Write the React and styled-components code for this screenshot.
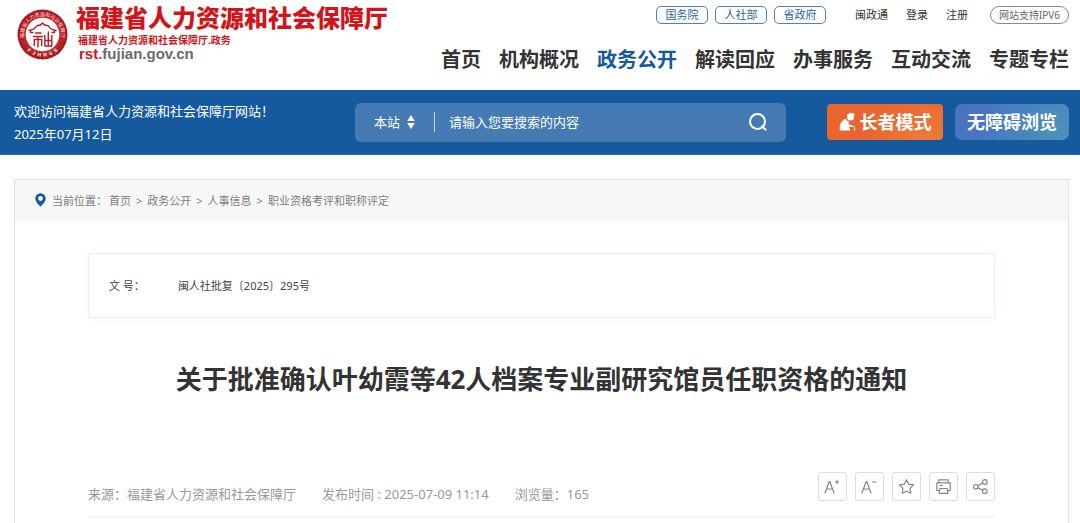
import React from "react";
import styled, { createGlobalStyle } from "styled-components";

const GlobalStyle = createGlobalStyle`
  *, *::before, *::after { box-sizing: border-box; }
  body {
    margin: 0;
    background: #fff;
    color: #333;
    font-family: "Noto Sans", "Noto Sans CJK SC", sans-serif;
    font-size: 13px;
  }
  a { color: inherit; text-decoration: none; }
  h1, p, dl, dd, dt, ul, ol { margin: 0; padding: 0; }
  ul, ol { list-style: none; }
  button, input, select { font: inherit; color: inherit; margin: 0; }
  svg { display: block; flex: none; }
`;

const Page = styled.div`
  min-height: 100vh;
  display: flex;
  flex-direction: column;
`;

const Header = styled.header`
  display: flex;
  justify-content: space-between;
  height: 90px;
  padding: 5px 11px 0 16px;
`;

const Brand = styled.a`
  display: flex;
  gap: 7px;
  padding-top: 3px;
`;

const BrandText = styled.span`
  display: flex;
  flex-direction: column;
  white-space: nowrap;
  color: #d0161b;
`;

const BrandName = styled.span`
  font-size: 24px;
  font-weight: 900;
  line-height: 20px;
`;

const BrandSub = styled.span`
  margin-top: 6px;
  padding-left: 2px;
  font-size: 10px;
  font-weight: 700;
  line-height: 12px;
`;

const BrandUrl = styled.span`
  padding-left: 3px;
  font-family: "Liberation Sans", sans-serif;
  font-size: 15px;
  font-weight: 700;
  line-height: 16px;
  color: #6b6b6b;
  b { color: #d0161b; }
`;

const HeaderSide = styled.div`
  display: flex;
  flex-direction: column;
  align-items: flex-end;
  gap: 22px;
`;

const TopLinks = styled.div`
  display: flex;
  align-items: center;
  height: 19px;
  font-size: 11px;
  line-height: 16px;
  white-space: nowrap;
`;

const Group = styled.div`
  display: flex;
  gap: ${(p) => p.$gap};
  margin-right: ${(p) => p.$after};
`;

const Tag = styled.a`
  width: 52px;
  height: 18px;
  border: 1px solid #4f81bd;
  border-radius: 5px;
  line-height: 16px;
  text-align: center;
  color: #2b62a5;
`;

const Pill = styled.a`
  width: 79px;
  height: 18px;
  border: 1px solid #8a8a8a;
  border-radius: 9px;
  font-size: 10px;
  line-height: 16px;
  text-align: center;
  color: #666;
`;

const Nav = styled.nav`
  display: flex;
  gap: 18px;
  font-size: 20px;
  font-weight: 700;
  line-height: 28px;
  white-space: nowrap;
`;

const NavLink = styled.a`
  color: ${(p) => (p.$active ? "#15599f" : "#333")};
`;

const Banner = styled.section`
  display: grid;
  grid-template-columns: 341px minmax(0, 1fr) auto;
  align-items: start;
  height: 65px;
  padding: 13px 11px 0 14px;
  background: #15599f;
  border-bottom: 1px solid #2b6bb0;
  color: #fff;
`;

const Welcome = styled.div`
  margin-top: -3px;
  font-size: 13px;
  line-height: 23px;
`;

const SearchForm = styled.form`
  display: flex;
  align-items: center;
  height: 39px;
  margin-right: 41px;
  padding: 0 18px 1px 19px;
  border-radius: 6px;
  background: #467ab3;
`;

const Scope = styled.label`
  display: flex;
  align-items: center;
  gap: 6px;
  padding-right: 19px;
  border-right: 1px solid #c3d3e6;
`;

const ScopeSelect = styled.select`
  width: 27px;
  height: 20px;
  padding: 0;
  border: 0;
  outline: 0;
  appearance: none;
  background: transparent;
  line-height: 20px;
`;

const SearchInput = styled.input`
  flex: 1;
  min-width: 0;
  height: 30px;
  padding: 0 14px;
  border: 0;
  outline: 0;
  background: transparent;
  &::placeholder { color: #fff; opacity: 1; }
`;

const SearchButton = styled.button`
  padding: 0;
  border: 0;
  background: transparent;
  cursor: pointer;
`;

const Modes = styled.div`
  display: flex;
  gap: 12px;
`;

const ModeButton = styled.button`
  display: flex;
  align-items: center;
  justify-content: center;
  gap: 4px;
  height: 36px;
  padding: 0 0 2px;
  width: ${(p) => p.$width};
  margin-top: 1px;
  border: 0;
  border-radius: ${(p) => p.$radius};
  background: ${(p) => p.$fill};
  font-size: 18px;
  font-weight: 700;
  color: #fff;
  white-space: nowrap;
  cursor: pointer;
`;

const Card = styled.main`
  flex: 1;
  margin: 24px 11px 0 14px;
  border: 1px solid #e3e3e3;
  border-bottom: 0;
`;

const Crumbs = styled.nav`
  display: flex;
  align-items: center;
  height: 41px;
  padding: 0 0 1px 20px;
  background: #f7f7f7;
  font-size: 11px;
  color: #808080;
  ol { display: flex; }
  li + li::before { content: ">"; margin: 0 5px; }
`;

const CrumbLabel = styled.span`
  margin: 0 2px 0 6px;
`;

const Article = styled.article`
  padding: 32px 73px 5px;
`;

const DocInfo = styled.dl`
  display: flex;
  align-items: center;
  gap: 33px;
  height: 65px;
  padding: 0 20px 2px;
  border: 1px solid #eee;
  box-shadow: 0 0 10px rgba(0, 0, 0, 0.04);
  font-size: 11px;
  color: #444;
`;

const Title = styled.h1`
  margin: 42px 0 74px;
  font-size: 26px;
  font-weight: 700;
  line-height: 38px;
  text-align: center;
`;

const Meta = styled.div`
  display: flex;
  justify-content: space-between;
  height: 46px;
  border-bottom: 2px solid #f5f5f5;
`;

const MetaList = styled.ul`
  display: flex;
  gap: 26px;
  padding-top: 12px;
  line-height: 20px;
  color: #999;
  white-space: nowrap;
`;

const Tools = styled.div`
  display: flex;
  gap: 8px;
`;

const ToolButton = styled.button`
  display: flex;
  align-items: center;
  justify-content: center;
  width: 29px;
  height: 29px;
  padding: 0;
  border: 1px solid #ddd;
  border-radius: 3px;
  background: #fff;
  cursor: pointer;
`;

const Emblem = () => (
  <svg width="53" height="53" viewBox="0 0 53 53" aria-hidden="true">
    <defs>
      <radialGradient id="ring" cx="50%" cy="50%" r="50%">
        <stop offset="0.7" stopColor="#c5262b" />
        <stop offset="1" stopColor="#a5161c" />
      </radialGradient>
      <path id="arcTop" d="M10.5 36 A18.6 18.6 0 1 1 42.5 36" />
      <path id="arcBottom" d="M4.6 31 A22.4 22.4 0 0 0 48.4 31" />
    </defs>
    <circle cx="26.5" cy="26.5" r="25" fill="url(#ring)" />
    <circle cx="26.5" cy="26.5" r="16.8" fill="#fff" />
    <text fontSize="5" fontWeight="400" fill="#f6dcdc">
      <textPath href="#arcTop" startOffset="50%" textAnchor="middle">福建省人力资源和社会保障厅</textPath>
    </text>
    <text fontSize="5" fontWeight="700" fill="#fff" fontFamily="Liberation Sans, sans-serif">
      <textPath href="#arcBottom" startOffset="50%" textAnchor="middle">F &#160;J &#160;H &#160;R &#160;S &#160;S</textPath>
    </text>
    <g fill="none" stroke="#b51d22" strokeWidth="1.4" strokeLinecap="round" strokeLinejoin="round">
      <path d="M13 22.5 Q18.5 21.8 21 17.5 Q24.5 18 26.5 15 Q28.5 18 32 17.5 Q34.5 21.8 40 22.5" />
      <path d="M14.5 22.5 V24.5 H17 M38.5 22.5 V24.5 H36" />
      <path d="M19.5 25 H25 M17.5 28.5 H26.5 M22 28.5 V39 M18.3 31.5 V37.5 M25.7 31.5 V37.5 M18.3 31.5 H25.7" />
      <path d="M32.3 24 V38 M28.8 27.5 V38 H35.8 V27.5 M28.8 32.5 H35.8" />
    </g>
  </svg>
);

const ElderIcon = () => (
  <svg width="17" height="19" viewBox="0 0 17 19" aria-hidden="true">
    <circle cx="11.6" cy="5" r="3.5" fill="#fff" />
    <path fill="#fff" d="M7.6 3.6 Q9 .8 12 1 Q14.6 .6 15.8 2.6 L14.6 4.2 Z" />
    <path
      fill="#fff"
      d="M6.6 6.8 Q8 9.4 10.2 9.8 L9.2 12 L13.4 13.6 L12.8 15 L9.4 14.4 L11.6 18.6 H.8 Q0 13.6 2.2 10.4 Q4 7.6 6.6 6.8 Z"
    />
    <path fill="none" stroke="#fff" d="M12.8 14.6 Q15.6 13.4 15.6 15.4 V18.6" />
  </svg>
);

const line = { fill: "none", stroke: "#858585", strokeWidth: 1.2, strokeLinejoin: "round", strokeLinecap: "round" };

const toolIcons = [
  ["放大字体", <><path d="M1 15 L5.2 3.5 H5.8 L10 15 M2.5 11 H8.5" /><path d="M11.5 4 H14.5 M13 2.5 V5.5" /></>],
  ["缩小字体", <><path d="M1 15 L5.2 3.5 H5.8 L10 15 M2.5 11 H8.5" /><path d="M11.5 4 H15" /></>],
  ["收藏", <path d="M8.5 1.8 L10.7 6.2 L15.4 6.9 L12.1 10.3 L12.8 15.2 L8.5 13.2 L4.2 15.2 L4.9 10.3 L1.6 6.9 L6.3 6.2 Z" />],
  ["打印", <><path d="M3.8 4.5 V1.8 H13.2 V4.5" /><path d="M3.8 12.5 H1.8 V4.8 H15.2 V12.5 H13.2" /><path d="M4.8 10.5 H12.2 L13 15.3 H4 Z M4.8 7.5 H7.5" /></>],
  ["分享", <><circle cx="3.8" cy="8.8" r="2.3" /><circle cx="12.8" cy="4" r="2.3" /><circle cx="12.8" cy="13.2" r="2.3" /><path d="M5.9 7.7 L10.7 5.1 M5.9 9.9 L10.7 12.1" /></>],
];

const navItems = ["首页", "机构概况", "政务公开", "解读回应", "办事服务", "互动交流", "专题专栏"];
const crumbs = ["首页", "政务公开", "人事信息", "职业资格考评和职称评定"];

export default function App() {
  return (
    <Page>
      <GlobalStyle />
      <Header>
        <Brand href="#">
          <Emblem />
          <BrandText>
            <BrandName>福建省人力资源和社会保障厅</BrandName>
            <BrandSub>福建省人力资源和社会保障厅.政务</BrandSub>
            <BrandUrl><b>rst</b>.fujian.gov.cn</BrandUrl>
          </BrandText>
        </Brand>
        <HeaderSide>
          <TopLinks>
            <Group $gap="7px" $after="29px">
              {["国务院", "人社部", "省政府"].map((t) => <Tag href="#" key={t}>{t}</Tag>)}
            </Group>
            <Group $gap="18px" $after="22px">
              {["闽政通", "登录", "注册"].map((t) => <a href="#" key={t}>{t}</a>)}
            </Group>
            <Pill href="#">网站支持IPV6</Pill>
          </TopLinks>
          <Nav>
            {navItems.map((t) => <NavLink href="#" key={t} $active={t === "政务公开"}>{t}</NavLink>)}
          </Nav>
        </HeaderSide>
      </Header>

      <Banner>
        <Welcome>
          <p>欢迎访问福建省人力资源和社会保障厅网站！</p>
          <p>2025年07月12日</p>
        </Welcome>
        <SearchForm onSubmit={(e) => e.preventDefault()}>
          <Scope>
            <ScopeSelect aria-label="搜索范围"><option>本站</option></ScopeSelect>
            <svg width="8" height="14" viewBox="0 0 8 14" aria-hidden="true">
              <path d="M4 0 L7.8 6 H.2 Z M4 14 L7.8 8 H.2 Z" fill="#fff" />
            </svg>
          </Scope>
          <SearchInput type="text" aria-label="搜索内容" placeholder="请输入您要搜索的内容" />
          <SearchButton type="submit" aria-label="搜索">
            <svg width="20" height="20" viewBox="0 0 20 20" fill="none" stroke="#fff" strokeWidth="2" strokeLinecap="round">
              <circle cx="9.5" cy="9.5" r="7.5" />
              <path d="M14 14.5 L17.5 17.5" />
            </svg>
          </SearchButton>
        </SearchForm>
        <Modes>
          <ModeButton type="button" $width="116px" $radius="4px" $fill="radial-gradient(circle at 85% 110%, #ec7d3a, #e8652f 55%)">
            <ElderIcon />长者模式
          </ModeButton>
          <ModeButton type="button" $width="114px" $radius="7px" $fill="radial-gradient(circle at 90% 80%, #4a93b8, #4874c2 75%)">
            无障碍浏览
          </ModeButton>
        </Modes>
      </Banner>

      <Card>
        <Crumbs aria-label="当前位置">
          <svg width="11" height="14" viewBox="0 0 11 14" aria-hidden="true">
            <path fillRule="evenodd" fill="#15599f" d="M5.5 .3 A5.2 5.2 0 0 1 10.7 5.5 C10.7 8.6 7.6 11.4 5.5 13.7 C3.4 11.4 .3 8.6 .3 5.5 A5.2 5.2 0 0 1 5.5 .3 Z M5.5 3.1 A2.4 2.4 0 1 0 5.5 7.9 A2.4 2.4 0 1 0 5.5 3.1 Z" />
          </svg>
          <CrumbLabel>当前位置：</CrumbLabel>
          <ol>{crumbs.map((t) => <li key={t}><a href="#">{t}</a></li>)}</ol>
        </Crumbs>
        <Article>
          <DocInfo>
            <dt>文 号：</dt>
            <dd>闽人社批复〔2025〕295号</dd>
          </DocInfo>
          <Title>关于批准确认叶幼霞等42人档案专业副研究馆员任职资格的通知</Title>
          <Meta>
            <MetaList>
              <li>来源：福建省人力资源和社会保障厅</li>
              <li>发布时间 : 2025-07-09 11:14</li>
              <li>浏览量：165</li>
            </MetaList>
            <Tools>
              {toolIcons.map(([label, shape]) => (
                <ToolButton type="button" key={label} aria-label={label}>
                  <svg width="17" height="17" viewBox="0 0 17 17" {...line}>{shape}</svg>
                </ToolButton>
              ))}
            </Tools>
          </Meta>
        </Article>
      </Card>
    </Page>
  );
}
